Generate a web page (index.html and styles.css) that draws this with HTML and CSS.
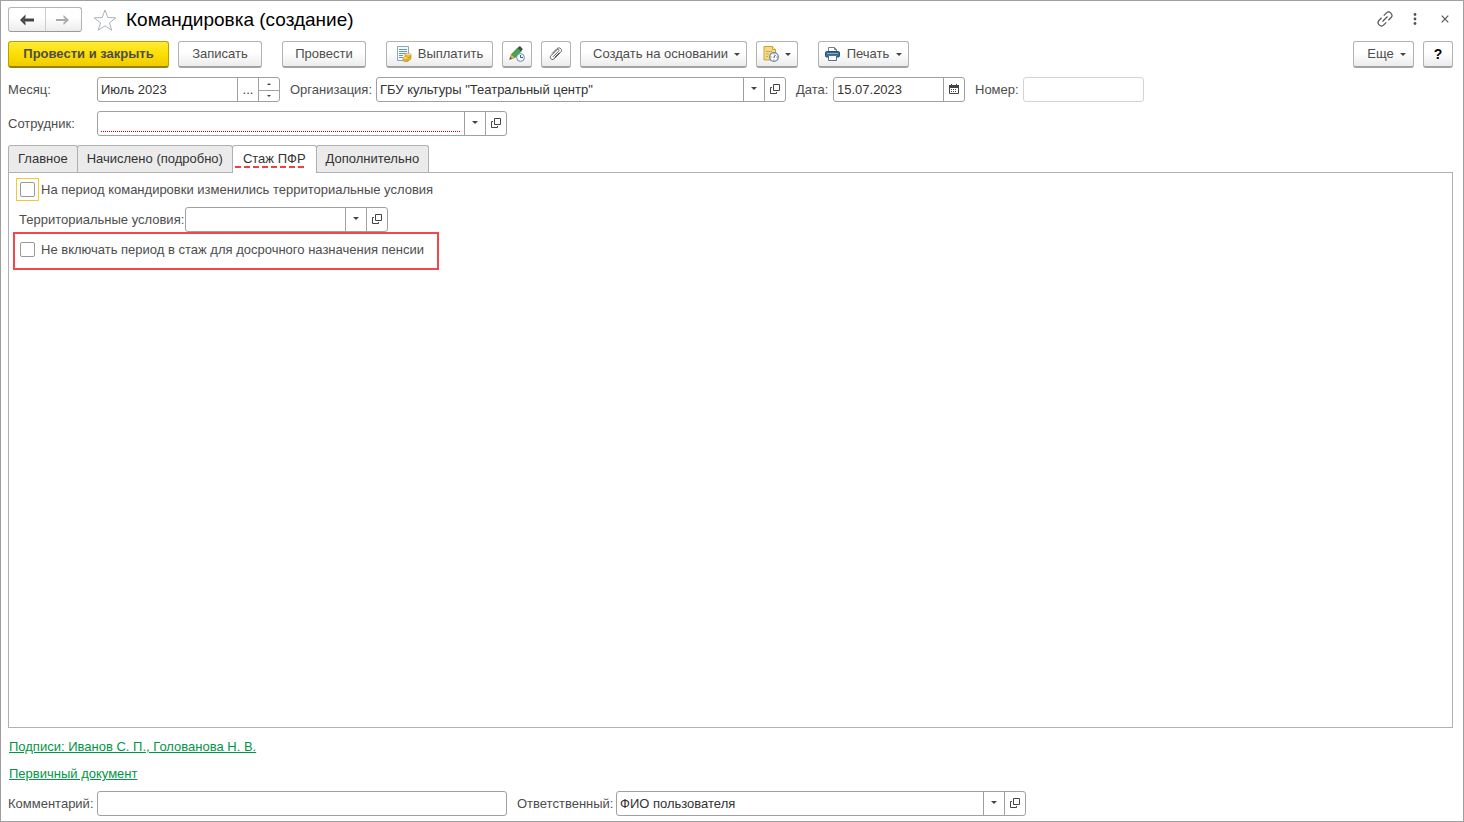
FILE: index.html
```html
<!DOCTYPE html>
<html lang="ru">
<head>
<meta charset="utf-8">
<title>Командировка (создание)</title>
<link rel="stylesheet" href="styles.css">
</head>
<body>
<svg class="sprites" aria-hidden="true">
  <symbol id="i-open" viewBox="0 0 10 10"><path d="M3.5.5h6v6h-6zM2 3.500H.5v6h6V8" fill="none" stroke="#444"/></symbol>
  <symbol id="i-down" viewBox="0 0 6 3"><path d="M0 0h6L3 3z" fill="#444"/></symbol>
</svg>
<div class="window">
  <header class="titlebar">
    <div class="history">
      <button type="button" aria-label="Назад"><svg width="16" height="12" viewBox="0 0 16 12"><path d="M5 6h10" stroke="#444" stroke-width="3"/><path d="M6.500.5L1 6l5.500 5.500V8.500L4.500 6l2-2.500z" fill="#444"/></svg></button>
      <button type="button" aria-label="Вперед"><svg width="16" height="12" viewBox="0 0 16 12"><path d="M1 6h12" stroke="#aaa" stroke-width="2"/><path d="M8.500 1L14 6l-5.500 5V8.500L11.500 6l-3-2.500z" fill="#aaa"/></svg></button>
    </div>
    <button type="button" class="ghost star" aria-label="В избранное"><svg width="24" height="22" viewBox="0 0 24 22"><path d="M12 1l2.800 7.500 8 .3-6.300 5 2.200 7.400L12 16.800 5.300 21.200l2.200-7.400-6.300-5 8-.3z" fill="none" stroke="#aab2ba"/></svg></button>
    <h1>Командировка (создание)</h1>
    <div class="window-tools">
      <button type="button" class="ghost" aria-label="Ссылка"><svg width="18" height="18" viewBox="0 0 18 18" fill="none" stroke="#555" stroke-width="1.200"><g transform="rotate(-45 9 9)"><path d="M7.500 5.700H4a3.300 3.300 0 0 0 0 6.600h3.500M10.500 5.700H14a3.300 3.300 0 0 1 0 6.600h-3.500M5.500 9h7"/></g></svg></button>
      <button type="button" class="ghost" aria-label="Меню"><svg width="4" height="12" viewBox="0 0 4 12" fill="#555"><circle cx="2" cy="1.500" r="1.400"/><circle cx="2" cy="6" r="1.400"/><circle cx="2" cy="10.500" r="1.400"/></svg></button>
      <button type="button" class="ghost" aria-label="Закрыть"><svg width="8" height="8" viewBox="0 0 8 8"><path d="M.7.7l6.600 6.600M7.300.7L.7 7.300" stroke="#555" stroke-width="1.200"/></svg></button>
    </div>
  </header>

  <div class="toolbar">
    <button type="button" class="btn primary">Провести и закрыть</button>
    <button type="button" class="btn plain">Записать</button>
    <button type="button" class="btn plain group">Провести</button>
    <button type="button" class="btn group with-icon pay"><svg width="16" height="16" viewBox="0 0 16 16"><path d="M1.500.5h11v14h-11z" fill="#f4f9fc" stroke="#8aa7bb"/><path d="M3 3.500h8M3 5.500h8M3 7.500h8M3 9.500h4M3 11.500h4" stroke="#7192ab"/><path d="M7 12v2c0 2.200 6 2.200 6 0v-2z" fill="#e9b62f" stroke="#b98516" stroke-width=".6"/><path d="M9 8.500v4c0 2 6 2 6 0v-4z" fill="#efbd35" stroke="#b98516" stroke-width=".6"/><path d="M9 10.500c1 1.500 5 1.500 6 0" fill="none" stroke="#b98516" stroke-width=".7"/><ellipse cx="12" cy="8.500" rx="3" ry="1.300" fill="#fbe07a" stroke="#c99a24" stroke-width=".5"/><ellipse cx="9.500" cy="12" rx="2.500" ry="1.200" fill="#fbe07a" stroke="#c99a24" stroke-width=".5"/></svg>Выплатить</button>
    <button type="button" class="btn square" aria-label="Изменить"><svg width="16" height="16" viewBox="0 0 16 16"><path d="M2.300 8.500L8.500 2 12 5.500 6 11.700z" fill="#43a54f" stroke="#26753a" stroke-width=".6"/><path d="M8.500 2L10 .6q.8-.6 1.500 0l1.800 1.900q.6.700 0 1.400L12 5.500z" fill="#404b50"/><path d="M.6 13.500L2.300 8.500 6 11.700z" fill="#e6b450" stroke="#9a7434" stroke-width=".5"/><path d="M.5 13.500l.8-2.500 1.700 1.600z" fill="#444"/><circle cx="11.500" cy="11.500" r="3.900" fill="#f3f9fd" stroke="#6f8ba8"/><path d="M11.500 9v2.500H14" fill="none" stroke="#3c5a78"/></svg></button>
    <button type="button" class="btn square" aria-label="Файлы"><svg width="14" height="14" viewBox="0 0 14 14"><path d="M4 9.800L9.500 4.300c1.300-1.300-.3-2.800-1.600-1.500L2 8.700c-2.200 2.200.9 5.300 3.200 3.100l6.200-6.200c3-3-.9-6.400-3.700-3.700L3 6.600M5.500 10.500l5-5" fill="none" stroke="#606060"/></svg></button>
    <button type="button" class="btn menu create">Создать на основании<svg class="caret"><use href="#i-down"/></svg></button>
    <button type="button" class="btn menu compact" aria-label="Задачи"><svg width="16" height="16" viewBox="0 0 16 16"><path d="M1 .5h8.500l3 3v10.500H1z" fill="#f6d982" stroke="#c9a23f"/><path d="M9.500.5v3h3" fill="#fff2bd" stroke="#c9a23f"/><path d="M3 5.500h6M3 8h3M3 10.500h2" stroke="#cba951"/><circle cx="11" cy="11" r="4.300" fill="#fff" stroke="#5788b5" stroke-width="1.200"/><path d="M11 11l1.500-2M11 11v1" stroke="#2f5d88"/><path d="M11 7.500v1M11 13.500v1M7.500 11h1M13.500 11h1" stroke="#d73838"/></svg><svg class="caret"><use href="#i-down"/></svg></button>
    <button type="button" class="btn menu group print"><svg width="15" height="14" viewBox="0 0 15 14"><path d="M3.500 5V.5h6l2 2V5" fill="#fff" stroke="#6a7f91"/><path d="M9.500.5v2h2" fill="none" stroke="#6a7f91"/><rect x=".5" y="4.500" width="14" height="5.500" rx="1.200" fill="#376c98" stroke="#234f76"/><path d="M2 6.500h11" stroke="#7fabcb"/><path d="M3.500 8.500h8v5h-8z" fill="#fff" stroke="#58718a"/></svg><span>Печать</span><svg class="caret"><use href="#i-down"/></svg></button>
    <button type="button" class="btn menu more">Еще<svg class="caret"><use href="#i-down"/></svg></button>
    <button type="button" class="btn square help">?</button>
  </div>

  <div class="row">
    <label class="first" for="month">Месяц:</label>
    <div class="field month">
      <input id="month" type="text" value="Июль 2023">
      <button type="button" aria-label="Выбрать">...</button>
      <div class="spin">
        <button type="button" aria-label="Больше"><svg width="4" height="2" viewBox="0 0 4 2"><path d="M0 2h4L2 0z" fill="#444"/></svg></button>
        <button type="button" aria-label="Меньше"><svg width="4" height="2" viewBox="0 0 4 2"><path d="M0 0h4L2 2z" fill="#444"/></svg></button>
      </div>
    </div>
    <label class="next org" for="org">Организация:</label>
    <div class="field wide">
      <input id="org" type="text" value="ГБУ культуры &quot;Театральный центр&quot;">
      <button type="button" aria-label="Список"><svg class="caret"><use href="#i-down"/></svg></button>
      <button type="button" aria-label="Открыть"><svg class="open"><use href="#i-open"/></svg></button>
    </div>
    <label class="next date-label" for="date">Дата:</label>
    <div class="field date">
      <input id="date" type="text" value="15.07.2023">
      <button type="button" aria-label="Календарь"><svg width="10" height="10" viewBox="0 0 10 10"><path d="M.5 2v7.500h9V2z" fill="#fff" stroke="#444"/><path d="M0 1h10v3H0zM2 0h1v2H2zM7 0h1v2H7z" fill="#444"/><path d="M2 5.500h6M2 7.500h6" stroke="#444" stroke-dasharray="1 1"/></svg></button>
    </div>
    <label class="next num-label" for="number">Номер:</label>
    <div class="field number"><input id="number" type="text"></div>
  </div>

  <div class="row">
    <label class="first" for="employee">Сотрудник:</label>
    <div class="field wide required">
      <input id="employee" type="text">
      <button type="button" aria-label="Список"><svg class="caret"><use href="#i-down"/></svg></button>
      <button type="button" aria-label="Открыть"><svg class="open"><use href="#i-open"/></svg></button>
    </div>
  </div>

  <div class="tabs" role="tablist">
    <button type="button" role="tab">Главное</button>
    <button type="button" role="tab">Начислено (подробно)</button>
    <button type="button" role="tab" class="active" aria-selected="true">Стаж ПФР</button>
    <button type="button" role="tab">Дополнительно</button>
  </div>
  <main class="panel" role="tabpanel">
    <div class="check focused"><span class="focus-frame"><input id="changed" type="checkbox"></span><label for="changed">На период командировки изменились территориальные условия</label></div>
    <div class="territory">
      <label for="territory">Территориальные условия:</label>
      <div class="field">
        <input id="territory" type="text">
        <button type="button" aria-label="Список"><svg class="caret"><use href="#i-down"/></svg></button>
        <button type="button" aria-label="Открыть"><svg class="open"><use href="#i-open"/></svg></button>
      </div>
    </div>
    <div class="check marked"><input id="exclude" type="checkbox"><label for="exclude">Не включать период в стаж для досрочного назначения пенсии</label></div>
  </main>

  <footer>
    <a href="#">Подписи: Иванов С. П., Голованова Н. В.</a>
    <a href="#">Первичный документ</a>
    <div class="row">
      <label class="first" for="comment">Комментарий:</label>
      <div class="field wide"><input id="comment" type="text"></div>
      <label class="next resp-label" for="resp">Ответственный:</label>
      <div class="field wide">
        <input id="resp" type="text" value="ФИО пользователя">
        <button type="button" aria-label="Список"><svg class="caret"><use href="#i-down"/></svg></button>
        <button type="button" aria-label="Открыть"><svg class="open"><use href="#i-open"/></svg></button>
      </div>
    </div>
  </footer>
</div>
</body>
</html>
```
FILE: styles.css
```css
* { box-sizing: border-box; }
body {
  margin: 0;
  background: #fff;
  color: #4d4d4d;
  font: 13px/16px "Liberation Sans", Arial, sans-serif;
}
button, input { font: inherit; color: inherit; margin: 0; }
button { padding: 0; border: 0; background: none; white-space: nowrap; }
svg { display: block; flex: none; }
.sprites { position: absolute; width: 0; height: 0; }
.caret { width: 6px; height: 3px; }
.open { width: 10px; height: 10px; }

.window {
  display: flex;
  flex-direction: column;
  min-height: 100vh;
  padding: 6px 10px 5px 7px;
  border: 1px solid #a0a0a0;
}

/* Title bar */
.titlebar { display: flex; align-items: center; height: 25px; }
.history {
  display: flex;
  width: 74px;
  height: 25px;
  border: 1px solid #b3b3b3;
  border-bottom-color: #999;
  border-radius: 3px;
  background: linear-gradient(#fff 40%, #ececec);
}
.history button { flex: 1; display: grid; place-items: center; }
.history button + button { border-left: 1px solid #ccc; }
.ghost { display: grid; place-items: center; }
.star { margin-left: 11px; }
h1 {
  margin: 0 0 0 9px;
  color: #000;
  font-size: 19px;
  line-height: 24px;
  font-weight: 400;
}
.window-tools { display: flex; align-self: flex-start; margin-left: auto; margin-right: -7px; }
.window-tools .ghost { width: 30px; height: 23px; }

/* Command bar */
.toolbar { display: flex; gap: 9px; margin-top: 9px; }
.btn {
  display: flex;
  align-items: center;
  justify-content: center;
  height: 27px;
  border: 1px solid #b3b3b3;
  border-bottom: 2px solid #a3a3a3;
  border-radius: 3px;
  background: linear-gradient(#fff 45%, #ebebeb);
}
.btn.primary {
  width: 161px;
  border-color: #b9a200 #b9a200 #968300;
  background: linear-gradient(#ffea3c, #fddf00 50%, #efcc00);
  font-weight: 700;
}
.btn.plain { width: 84px; }
.btn.group { margin-left: 11px; }
.btn.square { width: 30px; }
.btn.with-icon { gap: 6px; width: 107px; }
.btn.menu { gap: 6px; padding: 0 6px 0 12px; }
.btn.create { width: 167px; }
.btn.compact { width: 42px; padding: 0 6px; }
.btn.print { gap: 7px; width: 91px; padding: 0 6px; }
.btn.more { width: 61px; margin-left: auto; }
.btn.help { color: #000; font-size: 14px; font-weight: 700; }

/* Form fields */
.row { display: flex; align-items: center; margin-top: 9px; }
.first { width: 89px; }
.next { padding-left: 10px; }
.org { width: 96px; }
.date-label { width: 47px; }
.num-label { width: 58px; }
.resp-label { width: 109px; }
.field {
  display: flex;
  height: 25px;
  border: 1px solid #a0a0a0;
  border-radius: 3px;
  background: #fff;
  color: #333;
}
.field input {
  flex: 1;
  min-width: 0;
  padding: 0 3px;
  border: 0;
  outline: 0;
  background: none;
}
.field > button, .spin {
  display: grid;
  place-items: center;
  width: 21px;
  border-left: 1px solid #a0a0a0;
}
.field > button svg { margin-bottom: 2px; }
.spin { grid-template-rows: 1fr 1fr; place-items: stretch; }
.spin button { display: grid; place-items: center; }
.spin button + button { border-top: 1px solid #a0a0a0; }
.month { width: 183px; }
.wide { width: 410px; }
.date { width: 132px; }
.number { width: 121px; border-color: #d4d4d4; }
.required input {
  margin: 0 4px 3px 3px;
  padding: 0;
  border-bottom: 1px dotted #e00000;
}

/* Tabs */
.tabs { display: flex; margin-top: 9px; }
.tabs button {
  position: relative;
  height: 27px;
  padding: 0 9px;
  border: 1px solid #b0b0b0;
  border-bottom: 0;
  border-radius: 3px 3px 0 0;
  background: #ebebeb;
  color: #333;
}
.tabs button + button { margin-left: -1px; }
.tabs .active {
  z-index: 1;
  height: 28px;
  margin-bottom: -1px;
  padding: 0 10px 2px;
  background: #fff;
}
.tabs .active::after {
  content: "";
  position: absolute;
  left: 2px;
  right: 10px;
  bottom: 5px;
  height: 2px;
  background: repeating-linear-gradient(90deg, #f04040 0 6px, transparent 6px 9px);
}
.panel {
  flex: 1;
  padding: 5px 4px;
  border: 1px solid #b0b0b0;
}
.check { display: flex; align-items: center; width: fit-content; }
.check input {
  appearance: none;
  width: 15px;
  height: 15px;
  margin: 3px;
  border: 1px solid #999;
  border-radius: 2px;
  background: #fff;
}
.focused { margin-left: 3px; }
.focus-frame { display: flex; border: 1px solid #f5c92b; }
.check label { padding-left: 2px; }
.territory { display: flex; align-items: center; margin: 6px 0 0 6px; }
.territory label { width: 166px; }
.territory .field { width: 203px; }
.marked {
  padding: 5px 13px 8px 2px;
  border: 2px solid #f44848;
}
.marked label { padding-left: 3px; }

/* Footer */
footer { display: flex; flex-direction: column; align-items: flex-start; margin-top: 11px; }
footer a { margin-left: 1px; color: #009646; }
footer a + a { margin-top: 11px; }
```
